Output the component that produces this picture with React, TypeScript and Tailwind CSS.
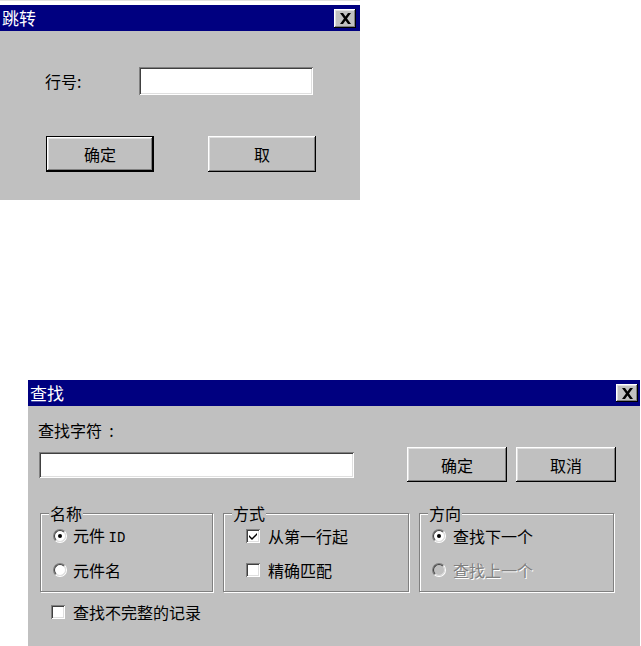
const raised =
  'shadow-[inset_-1px_-1px_#000,inset_1px_1px_#fff,inset_-2px_-2px_#808080,inset_2px_2px_#dfdfdf]'
const sunken =
  'shadow-[inset_1px_1px_#808080,inset_-1px_-1px_#fff,inset_2px_2px_#404040,inset_-2px_-2px_#dfdfdf]'

function CloseButton({ h }: { h: string }) {
  return (
    <div className={`w-[22px] ${h} bg-[#c0c0c0] ${raised} flex items-center justify-center`}>
      <svg width="13" height="11" viewBox="0 0 13 11">
        <path d="M1 0h3l2.5 3.5L9 0h3L8 5.5l4 5.5H9L6.5 7.5 4 11H1l4-5.5z" fill="#000" />
      </svg>
    </div>
  )
}

function TitleBar({ title, h, closeH, pr }: { title: string; h: string; closeH: string; pr: string }) {
  return (
    <div className={`${h} bg-[#000080] flex items-center justify-between pl-[2px] ${pr}`}>
      <span className="text-white text-[17px] leading-4">{title}</span>
      <CloseButton h={closeH} />
    </div>
  )
}

function Button({ label, w, h, isDefault }: { label: string; w: string; h: string; isDefault?: boolean }) {
  return (
    <div className={`${w} ${h} ${isDefault ? 'border border-black' : ''} bg-[#c0c0c0]`}>
      <div className={`w-full h-full ${raised} flex items-center justify-center text-[16px] leading-4 text-black`}>
        {label}
      </div>
    </div>
  )
}

function Radio({ checked, disabled }: { checked?: boolean; disabled?: boolean }) {
  return (
    <span className="w-[14px] h-[14px] rounded-full border border-t-[#808080] border-l-[#808080] border-b-white border-r-white flex shrink-0">
      <span
        className={`w-full h-full rounded-full border border-t-[#404040] border-l-[#404040] border-b-[#dfdfdf] border-r-[#dfdfdf] flex items-center justify-center ${
          disabled ? 'bg-[#c0c0c0]' : 'bg-white'
        }`}
      >
        {checked && <span className="w-[4px] h-[4px] rounded-full bg-black" />}
      </span>
    </span>
  )
}

function Check({ checked }: { checked?: boolean }) {
  return (
    <span className={`w-[14px] h-[14px] bg-white ${sunken} flex items-center justify-center shrink-0`}>
      {checked && (
        <svg width="8" height="8" viewBox="0 0 8 8">
          <path d="M0 3l3 3 5-5v2L3 8 0 5z" fill="#000" />
        </svg>
      )}
    </span>
  )
}

function GroupBox({ title, w, children }: { title: string; w: string; children: React.ReactNode }) {
  return (
    <div
      className={`relative ${w} h-[79px] border border-[#808080] shadow-[inset_1px_1px_#fff,1px_1px_#fff] flex flex-col gap-[14px] pt-[12px]`}
    >
      <span className="absolute -top-[9px] left-[8px] px-[1px] bg-[#c0c0c0] text-[16px] leading-4">{title}</span>
      {children}
    </div>
  )
}

export default function App() {
  return (
    <div className="w-[641px] h-[646px] bg-white overflow-hidden font-['Noto_Sans_CJK_SC',sans-serif] text-black">
      {/* 跳转 dialog */}
      <div className="w-[360px] h-[200px] pt-[4px] flex flex-col border-t border-[#e0e0e0]">
        <TitleBar title="跳转" h="h-[26px]" closeH="h-[19px]" pr="pr-[4px]" />
        <div className="flex-1 bg-[#c0c0c0]">
          <div className="mt-[36px] flex items-center">
            <span className="ml-[45px] w-[94px] text-[16px] leading-4">行号:</span>
            <div className={`w-[174px] h-[28px] bg-white ${sunken}`} />
          </div>
          <div className="mt-[41px] flex pl-[46px] gap-[54px]">
            <Button label="确定" w="w-[108px]" h="h-[36px]" isDefault />
            <Button label="取" w="w-[108px]" h="h-[36px]" />
          </div>
        </div>
      </div>

      {/* 查找 dialog */}
      <div className="ml-[28px] mt-[180px] w-[612px] h-[266px] flex flex-col">
        <TitleBar title="查找" h="h-[26px]" closeH="h-[18px]" pr="pr-[2px]" />
        <div className="flex-1 bg-[#c0c0c0]">
          <div className="pt-[16px] pl-[10px] text-[16px] leading-4">查找字符&nbsp;&nbsp;:</div>
          <div className="mt-[9px] flex items-center">
            <div className={`ml-[11px] w-[315px] h-[26px] bg-white ${sunken}`} />
            <div className="ml-[53px] flex gap-[9px]">
              <Button label="确定" w="w-[100px]" h="h-[35px]" />
              <Button label="取消" w="w-[100px]" h="h-[35px]" />
            </div>
          </div>
          <div className="mt-[31px] ml-[12px] flex gap-[10px] text-[16px] leading-5">
            <GroupBox title="名称" w="w-[173px]">
              <div className="h-5 flex items-center pl-[12px] gap-[6px]">
                <Radio checked />
                <span>
                  元件 <span className="font-['Liberation_Mono',monospace] text-[14px]">ID</span>
                </span>
              </div>
              <div className="h-5 flex items-center pl-[12px] gap-[6px]">
                <Radio />
                <span>元件名</span>
              </div>
            </GroupBox>
            <GroupBox title="方式" w="w-[186px]">
              <div className="h-5 flex items-center pl-[22px] gap-[8px]">
                <Check checked />
                <span>从第一行起</span>
              </div>
              <div className="h-5 flex items-center pl-[22px] gap-[8px]">
                <Check />
                <span>精确匹配</span>
              </div>
            </GroupBox>
            <GroupBox title="方向" w="w-[195px]">
              <div className="h-5 flex items-center pl-[12px] gap-[7px]">
                <Radio checked />
                <span>查找下一个</span>
              </div>
              <div className="h-5 flex items-center pl-[12px] gap-[7px]">
                <Radio disabled />
                <span className="text-[#808080] [text-shadow:1px_1px_0_#fff]">查找上一个</span>
              </div>
            </GroupBox>
          </div>
          <div className="mt-[10px] ml-[23px] h-5 flex items-center gap-[8px] text-[16px] leading-5">
            <Check />
            <span>查找不完整的记录</span>
          </div>
        </div>
      </div>
    </div>
  )
}
